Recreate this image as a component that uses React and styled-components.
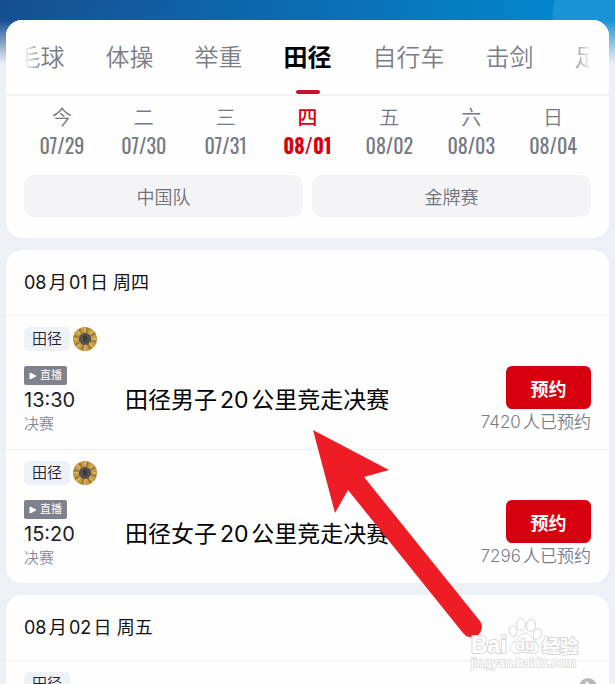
import React, { useState } from "react";
import styled, { createGlobalStyle } from "styled-components";

const sports = ["羽毛球", "体操", "举重", "田径", "自行车", "击剑", "足球"];

const days = [
  { week: "今", date: "07/29" },
  { week: "二", date: "07/30" },
  { week: "三", date: "07/31" },
  { week: "四", date: "08/01" },
  { week: "五", date: "08/02" },
  { week: "六", date: "08/03" },
  { week: "日", date: "08/04" },
];

const schedule = [
  {
    title: "08月01日 周四",
    events: [
      { time: "13:30", name: "田径男子20公里竞走决赛", booked: 7420, medal: true },
      { time: "15:20", name: "田径女子20公里竞走决赛", booked: 7296, medal: true },
    ],
  },
  {
    title: "08月02日 周五",
    events: [{ time: "16:00", name: "田径女子100米预赛", booked: 5130, medal: false }],
  },
];

const MedalIcon = () => {
  const rays = [];
  for (let i = 0; i < 24; i++) {
    rays.push(
      <path
        key={i}
        d="M12 12 L11 0.6 L13 0.6 Z"
        fill={i % 3 === 0 ? "#dcbb74" : i % 3 === 1 ? "#a37a2c" : "#cda046"}
        transform={`rotate(${i * 15} 12 12)`}
      />
    );
  }
  return (
    <svg width="24" height="24" viewBox="0 0 24 24" aria-hidden="true">
      <circle cx="12" cy="12" r="12" fill="#b78d38" />
      {rays}
      <path d="M12 5.4 L17.2 8 L18.4 13 L15 17.8 L9 17.8 L5.6 13 L7 8 Z" fill="#55524c" />
      <path d="M10 9 L13.6 8.6 L14.4 12.5 L12.6 15.6 L10.4 13.5 Z" fill="#3a3b3d" />
    </svg>
  );
};

const PlayIcon = () => (
  <svg width="8" height="8" viewBox="0 0 8 8" aria-hidden="true">
    <path d="M1 1 L7 4 L1 7 Z" fill="#fff" stroke="#fff" strokeLinejoin="round" />
  </svg>
);

const EventItem = ({ event }) => (
  <EventRow>
    <TagLine>
      <Tag>田径</Tag>
      {event.medal ? <MedalIcon /> : null}
    </TagLine>
    <EventBody>
      <TimeCol>
        <Live>
          <PlayIcon />
          直播
        </Live>
        <Time>{event.time}</Time>
        <Stage>决赛</Stage>
      </TimeCol>
      <EventName>{event.name}</EventName>
      <BookCol>
        <BookButton type="button">预约</BookButton>
        <Booked>{event.booked}人已预约</Booked>
      </BookCol>
    </EventBody>
  </EventRow>
);

const App = () => {
  const [sport, setSport] = useState("田径");
  const [day, setDay] = useState("08/01");

  return (
    <>
      <GlobalStyle />
      <Page>
        <Card>
          <Tabs>
            {sports.map((el) => (
              <Tab key={el} type="button" $active={el === sport} onClick={() => setSport(el)}>
                {el}
              </Tab>
            ))}
          </Tabs>
          <Days>
            {days.map((el) => (
              <Day
                key={el.date}
                type="button"
                $active={el.date === day}
                onClick={() => setDay(el.date)}
              >
                <span>{el.week}</span>
                <b>{el.date}</b>
              </Day>
            ))}
          </Days>
          <Filters>
            <Filter type="button">中国队</Filter>
            <Filter type="button">金牌赛</Filter>
          </Filters>
        </Card>

        {schedule.map((group) => (
          <Card key={group.title}>
            <CardTitle>{group.title}</CardTitle>
            {group.events.map((event) => (
              <EventItem key={event.time} event={event} />
            ))}
          </Card>
        ))}

        <Arrow viewBox="0 0 172 210" aria-hidden="true">
          <path
            d="M1 1 L77 41 L52 48 L168 192 A10 10 0 0 1 151 204 L36 61 L23 84 Z"
            fill="#ee1c25"
          />
        </Arrow>

        <Watermark viewBox="0 0 116 56">
          <g fill="#fff" stroke="#d8d8d8" strokeWidth="1">
            <ellipse cx="43" cy="14" rx="4" ry="5.5" transform="rotate(-12 43 14)" />
            <ellipse cx="51" cy="7.5" rx="4.5" ry="6" />
            <ellipse cx="61" cy="8.5" rx="4.5" ry="6" transform="rotate(12 61 8.5)" />
            <ellipse cx="67.5" cy="17" rx="4" ry="5.5" transform="rotate(20 67.5 17)" />
            <path d="M55 16 C60 16 62 21 66 25 C72 31 69 38 61 36 Q55 34.5 49 36 C41 38 37 31 44 25 C48 21 50 16 55 16 Z" />
          </g>
          <g fill="#fff" stroke="#d8d8d8" strokeWidth="2" paintOrder="stroke" fontWeight="700">
            <text x="1" y="36" fontSize="23">Bai</text>
            <text x="46" y="33" fontSize="15">du</text>
            <text x="72" y="36" fontSize="18">经验</text>
          </g>
          <text
            x="1"
            y="50"
            fontSize="13"
            fill="#fff"
            stroke="#e2e2e2"
            strokeWidth="2"
            paintOrder="stroke"
          >
            jingyan.baidu.com
          </text>
        </Watermark>

        <MoreButton type="button" aria-label="more">
          <svg width="18" height="18" viewBox="0 0 18 18">
            <path d="M7 4 L12 9 L7 14" fill="none" stroke="#fff" strokeWidth="2" />
          </svg>
        </MoreButton>
      </Page>
    </>
  );
};

export default App;

const GlobalStyle = createGlobalStyle`
* {
  box-sizing: border-box;
}
body {
  margin: 0;
  background: #edf0f5;
  font-family: Inter, "Noto Sans CJK SC", sans-serif;
  text-autospace: normal;
}
button {
  border: 0;
  padding: 0;
  background: none;
  font-family: inherit;
  cursor: pointer;
}
h2, h3 {
  margin: 0;
  font-weight: 400;
}
`;

const Page = styled.main`
  position: relative;
  display: flex;
  flex-direction: column;
  gap: 12px;
  padding: 20px 6px;
  overflow: hidden;
  background:
    linear-gradient(to bottom, transparent 20px, #edf0f5 64px),
    radial-gradient(circle at calc(100% + 40px) 20px, #1b92d5 102px, transparent 103px),
    linear-gradient(100deg, #164f90 0%, #0b6db3 50%, #0386cc 88%);
  background-size: 100% 100%, 100% 100%, 100% 100px;
  background-repeat: no-repeat;
`;

const Card = styled.section`
  background: #fefefe;
  border-radius: 16px;
`;

const Tabs = styled.nav`
  position: relative;
  display: flex;
  justify-content: center;
  gap: 41px;
  height: 76px;
  overflow: hidden;
  border-bottom: 2px solid #f2f3f5;
  border-radius: 16px 16px 0 0;

  /* fades the names that run out of the row */
  &::after {
    content: "";
    position: absolute;
    inset: 0;
    pointer-events: none;
    background:
      linear-gradient(to right, #fefefe 18px, transparent 36px),
      linear-gradient(to left, #fefefe 18px, transparent 36px);
  }
`;

const Tab = styled.button`
  flex: none;
  display: flex;
  flex-direction: column;
  justify-content: space-between;
  align-items: center;
  padding-top: 20px;
  font-size: 24px;
  line-height: 36px;
  font-weight: ${({ $active }) => ($active ? 700 : 350)};
  color: ${({ $active }) => ($active ? "#000" : "#7a7d88")};

  &::after {
    content: "";
    width: 24px;
    height: 4px;
    border-radius: 2px;
    background: ${({ $active }) => ($active ? "#c8102e" : "transparent")};
  }
`;

const Days = styled.div`
  display: grid;
  grid-template-columns: repeat(7, 1fr);
  padding: 8px 15px 0;
`;

const Day = styled.button`
  display: flex;
  flex-direction: column;
  align-items: center;
  line-height: 28px;
  font-size: 20px;
  color: ${({ $active }) => ($active ? "#d7000f" : "#757985")};

  span {
    font-weight: ${({ $active }) => ($active ? 500 : 350)};
  }

  b {
    font-family: Oswald, "Roboto Condensed", "Liberation Sans Narrow", sans-serif;
    font-size: 20px;
    line-height: 26px;
    font-weight: ${({ $active }) => ($active ? 700 : 400)};
  }
`;

const Filters = styled.div`
  display: grid;
  grid-template-columns: 1fr 1fr;
  gap: 9px;
  padding: 17px 18px 21px;
`;

const Filter = styled.button`
  height: 42px;
  border-radius: 10px;
  background: #f4f4f7;
  font-size: 18px;
  font-weight: 350;
  color: #6f727e;
`;

const CardTitle = styled.h2`
  padding: 0 18px;
  font-size: 18px;
  line-height: 65px;
  color: #111;
`;

const EventRow = styled.article`
  padding: 11px 18px 14px;
  border-top: 1px solid #eeeff1;
`;

const TagLine = styled.div`
  display: flex;
  align-items: center;
  gap: 3px;
`;

const Tag = styled.span`
  padding: 0 8px;
  border-radius: 5px;
  background: #eef2f6;
  font-size: 15px;
  line-height: 24px;
  font-weight: 350;
  color: #22222e;
`;

const EventBody = styled.div`
  display: grid;
  grid-template-columns: 101px 1fr auto;
  padding-top: 15px;
`;

const TimeCol = styled.div`
  display: flex;
  flex-direction: column;
  align-items: flex-start;
`;

const Live = styled.span`
  display: flex;
  align-items: center;
  gap: 3px;
  padding: 0 5px;
  border-radius: 2px;
  background: #7f828d;
  font-size: 11px;
  line-height: 19px;
  color: #fff;
`;

const Time = styled.time`
  font-size: 20px;
  line-height: 30px;
  color: #1c1b2b;
`;

const Stage = styled.span`
  font-size: 15px;
  line-height: 18px;
  font-weight: 350;
  color: #868994;
`;

const EventName = styled.h3`
  padding-top: 16px;
  font-size: 23px;
  line-height: 36px;
  white-space: nowrap;
  color: #000;
`;

const BookCol = styled.div`
  display: flex;
  flex-direction: column;
  align-items: flex-end;
`;

const BookButton = styled.button`
  width: 85px;
  height: 43px;
  border-radius: 6px;
  background: #d7000f;
  font-size: 18px;
  font-weight: 700;
  color: #fff;
`;

const Booked = styled.span`
  font-size: 17px;
  line-height: 26px;
  font-weight: 350;
  color: #7a7d88;
`;

const Arrow = styled.svg`
  position: absolute;
  top: 429px;
  left: 312px;
  width: 172px;
  height: 210px;
  pointer-events: none;
`;

const Watermark = styled.svg`
  position: absolute;
  top: 617px;
  right: 29px;
  width: 116px;
  height: 56px;
  pointer-events: none;
  font-family: "Liberation Sans", "Noto Sans CJK SC", sans-serif;
`;

const MoreButton = styled.button`
  position: absolute;
  top: 678px;
  right: 18px;
  width: 18px;
  height: 18px;
  border-radius: 9px;
  background: #b9b9b9;
`;
